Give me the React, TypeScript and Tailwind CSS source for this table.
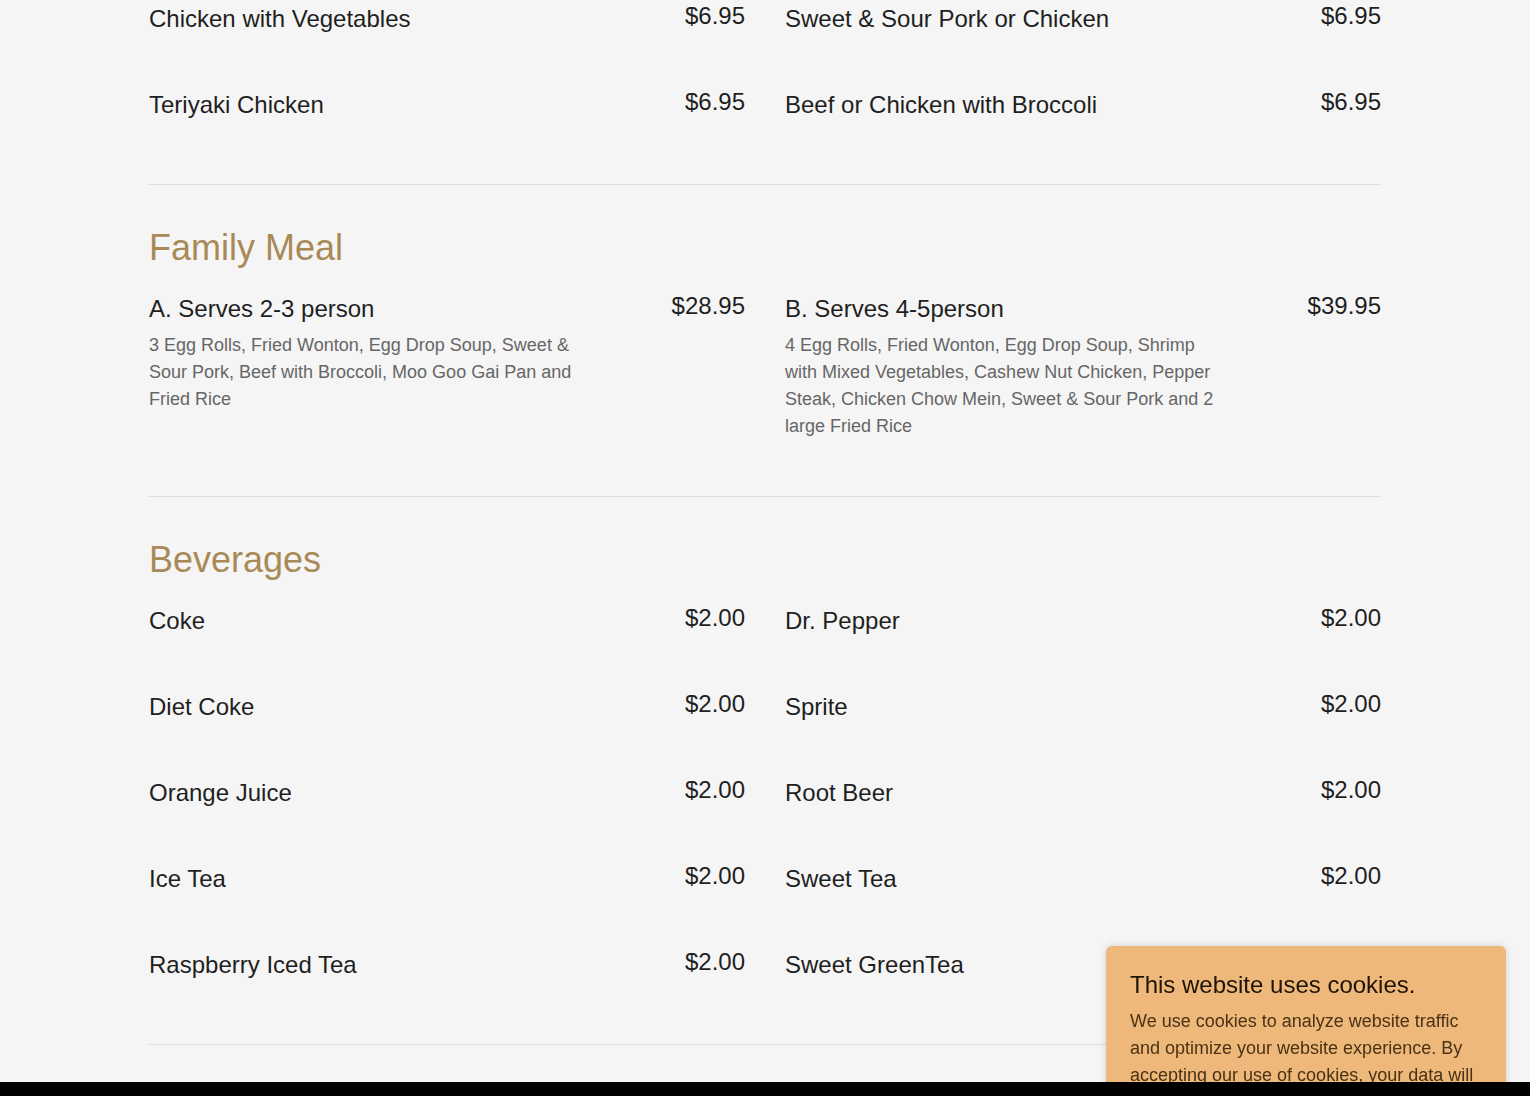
import React from "react";

type Item = { name: string; price: string; desc?: string };

const font = { fontFamily: '"Liberation Sans", Arial, sans-serif' };

function MenuItem({ item }: { item: Item }) {
  return (
    <div className="pb-[48px]">
      <div className="mb-[9px] flex items-start justify-between">
        <div className="text-[24px] leading-[29px] text-[#1f1f1f]">{item.name}</div>
        <div className="-mt-[3px] text-[24px] leading-[29px] text-[#1f1f1f]">{item.price}</div>
      </div>
      {item.desc && (
        <p className="max-w-[436px] text-[18px] leading-[27px] text-[#666666]">{item.desc}</p>
      )}
    </div>
  );
}

function Section({ title, items, first }: { title?: string; items: Item[]; first?: boolean }) {
  return (
    <section className={`border-b border-[#dddddd] pb-[8px] ${first ? "pt-[4px]" : "pt-[39px]"}`}>
      {title && (
        <h2 className="mb-[22px] text-[36px] leading-[48px] text-[#a98a57]">{title}</h2>
      )}
      <div className="grid grid-cols-2 gap-x-[40px]">
        {items.map((it, i) => (
          <MenuItem key={i} item={it} />
        ))}
      </div>
    </section>
  );
}

export default function App() {
  const top: Item[] = [
    { name: "Chicken with Vegetables", price: "$6.95" },
    { name: "Sweet & Sour Pork or Chicken", price: "$6.95" },
    { name: "Teriyaki Chicken", price: "$6.95" },
    { name: "Beef or Chicken with Broccoli", price: "$6.95" },
  ];
  const family: Item[] = [
    {
      name: "A. Serves 2-3 person",
      price: "$28.95",
      desc: "3 Egg Rolls, Fried Wonton, Egg Drop Soup, Sweet & Sour Pork, Beef with Broccoli, Moo Goo Gai Pan and Fried Rice",
    },
    {
      name: "B. Serves 4-5person",
      price: "$39.95",
      desc: "4 Egg Rolls, Fried Wonton, Egg Drop Soup, Shrimp with Mixed Vegetables, Cashew Nut Chicken, Pepper Steak, Chicken Chow Mein, Sweet & Sour Pork and 2 large Fried Rice",
    },
  ];
  const bev: Item[] = [
    { name: "Coke", price: "$2.00" },
    { name: "Dr. Pepper", price: "$2.00" },
    { name: "Diet Coke", price: "$2.00" },
    { name: "Sprite", price: "$2.00" },
    { name: "Orange Juice", price: "$2.00" },
    { name: "Root Beer", price: "$2.00" },
    { name: "Ice Tea", price: "$2.00" },
    { name: "Sweet Tea", price: "$2.00" },
    { name: "Raspberry Iced Tea", price: "$2.00" },
    { name: "Sweet GreenTea", price: "$2.00" },
  ];

  return (
    <div className="min-h-[1096px] bg-[#f5f5f5]" style={font}>
      <main className="mx-auto w-[1232px]">
        <Section items={top} first />
        <Section title="Family Meal" items={family} />
        <Section title="Beverages" items={bev} />
      </main>
      <div className="mt-[37px] h-[200px] bg-black" />

      <div className="fixed left-[1106px] top-[946px] w-[400px] rounded-[6px] bg-[#edb879] px-[24px] pb-[24px] pt-[24px] shadow-[0_0_8px_rgba(0,0,0,0.15)]">
        <div className="text-[24px] leading-[29px] text-[#1e1307]">This website uses cookies.</div>
        <p className="mt-[9px] text-[18px] leading-[27px] text-[#4a3214]">
          We use cookies to analyze website traffic and optimize your website experience. By accepting our use of cookies, your data will be aggregated with all other user data.
        </p>
      </div>
      <div className="fixed bottom-0 left-0 right-0 z-50 h-[14px] bg-black" />
    </div>
  );
}
